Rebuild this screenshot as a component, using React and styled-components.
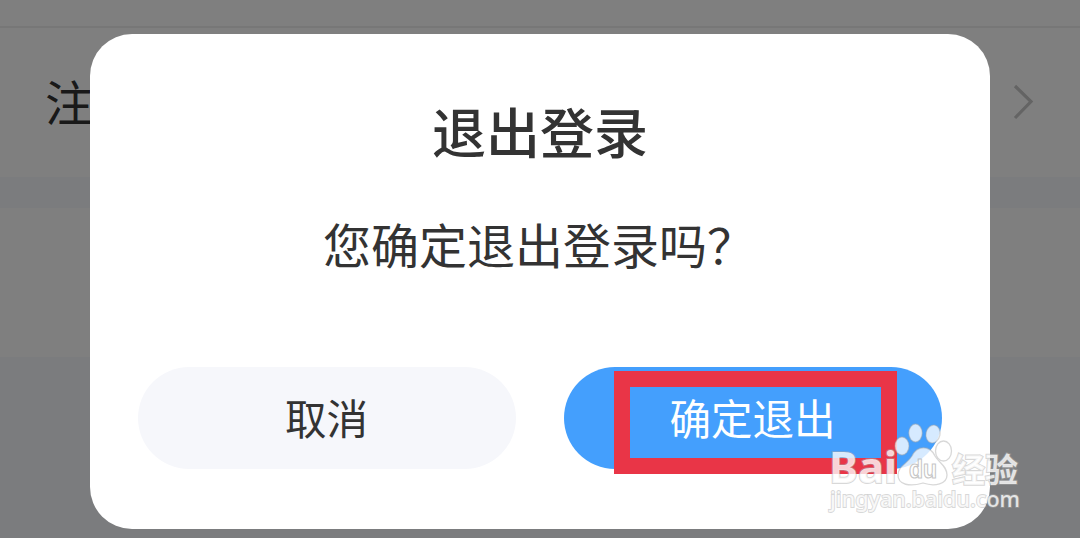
import React from "react";
import styled, { createGlobalStyle } from "styled-components";

const GlobalStyle = createGlobalStyle`
  * {
    box-sizing: border-box;
  }
  body {
    margin: 0;
    overflow: hidden;
    font-family: "Noto Sans CJK SC", "Noto Sans", sans-serif;
  }
`;

const Screen = styled.div`
  position: relative;
  width: 1080px;
  height: 538px;
  overflow: hidden;
  background: #f7f9fd;
`;

const Header = styled.div`
  height: 28px;
  background: #ffffff;
  border-bottom: 2px solid #eeeeee;
`;

const Row = styled.div`
  display: flex;
  align-items: center;
  justify-content: space-between;
  height: ${(props) => props.$height}px;
  margin-bottom: 31px;
  padding: 0 46px 0 45px;
  background: #ffffff;
`;

const RowLabel = styled.span`
  padding-bottom: 5px;
  font-size: 48px;
  line-height: 60px;
  color: #333333;
`;

const Overlay = styled.div`
  position: absolute;
  inset: 0;
  display: flex;
  align-items: flex-start;
  justify-content: center;
  padding-top: 34px;
  background: rgba(0, 0, 0, 0.5);
`;

const Dialog = styled.div`
  display: flex;
  flex-direction: column;
  align-items: center;
  width: 900px;
  height: 494.5px;
  padding: 61px 48px 0;
  border-radius: 42px;
  background: #ffffff;
`;

const Title = styled.div`
  font-size: 54px;
  font-weight: 500;
  line-height: 72px;
  color: #333333;
`;

const Message = styled.div`
  margin-top: 44px;
  padding-right: 2px;
  font-size: 48px;
  line-height: 64px;
  color: #333333;
`;

const Actions = styled.div`
  display: flex;
  gap: 48px;
  margin-top: 91.5px;
`;

const Button = styled.button`
  width: 378px;
  height: 102px;
  padding: 0 1px 2px 0;
  border: none;
  border-radius: 51px;
  font-family: inherit;
  font-size: 41.5px;
  line-height: 60px;
  color: ${(props) => (props.$primary ? "#ffffff" : "#333333")};
  background: ${(props) => (props.$primary ? "#449ffd" : "#f6f7fb")};
`;

const Highlight = styled.div`
  position: absolute;
  left: 614px;
  top: 371px;
  width: 283px;
  height: 103px;
  border: 16px solid #e93547;
`;

const Watermark = styled.svg`
  position: absolute;
  left: 820px;
  top: 410px;
`;

function Chevron() {
  return (
    <svg width="22" height="38" viewBox="0 0 22 38" fill="none">
      <path d="M3 2L19 17.5L3 34" stroke="#c8c8c8" strokeWidth="3.2" />
    </svg>
  );
}

function BaiduMark() {
  return (
    <Watermark width="220" height="110" viewBox="0 0 220 110">
      <g
        fill="#ffffff"
        fillOpacity="0.78"
        stroke="#a8a8a8"
        strokeOpacity="0.45"
        strokeWidth="1.3"
      >
        <g paintOrder="stroke" strokeWidth="2">
          <text x="9" y="73" fontFamily="Noto Sans" fontSize="43" fontWeight="bold" textLength="68" lengthAdjust="spacingAndGlyphs">
            Bai
          </text>
          <text x="132" y="72" fontFamily="Noto Sans CJK SC" fontSize="33" fontWeight="bold" textLength="66">
            经验
          </text>
          <text x="10" y="97" fontFamily="Noto Sans" fontSize="22" fontWeight="500" strokeWidth="1.8" textLength="190" lengthAdjust="spacingAndGlyphs">
            jingyan.baidu.com
          </text>
        </g>
        <ellipse cx="82" cy="36" rx="7" ry="9" />
        <ellipse cx="95.5" cy="23" rx="6.7" ry="9" />
        <ellipse cx="113" cy="24" rx="7" ry="9" transform="rotate(12 113 24)" />
        <ellipse cx="123.5" cy="41" rx="8" ry="10" />
        <path d="M92 46C97 35 110 35 115 46C119 53 127 56 127 65C127 74 115 77 103 73C90 77 78 75 78 65C78 56 87 54 92 46Z" />
      </g>
      <text x="89" y="68" fontFamily="Liberation Sans" fontSize="25" fontWeight="bold" fill="#ffffff" fillOpacity="0.7" stroke="#a0a0a0" strokeOpacity="0.6" strokeWidth="1.2" textLength="28" lengthAdjust="spacingAndGlyphs">
        du
      </text>
    </Watermark>
  );
}

function App() {
  return (
    <>
      <GlobalStyle />
      <Screen>
        <Header />
        <Row $height={149}>
          <RowLabel>注销</RowLabel>
          <Chevron />
        </Row>
        <Row $height={149} />
        <Overlay>
          <Dialog>
            <Title>退出登录</Title>
            <Message>您确定退出登录吗？</Message>
            <Actions>
              <Button>取消</Button>
              <Button $primary>确定退出</Button>
            </Actions>
          </Dialog>
        </Overlay>
        <Highlight />
        <BaiduMark />
      </Screen>
    </>
  );
}

export default App;
